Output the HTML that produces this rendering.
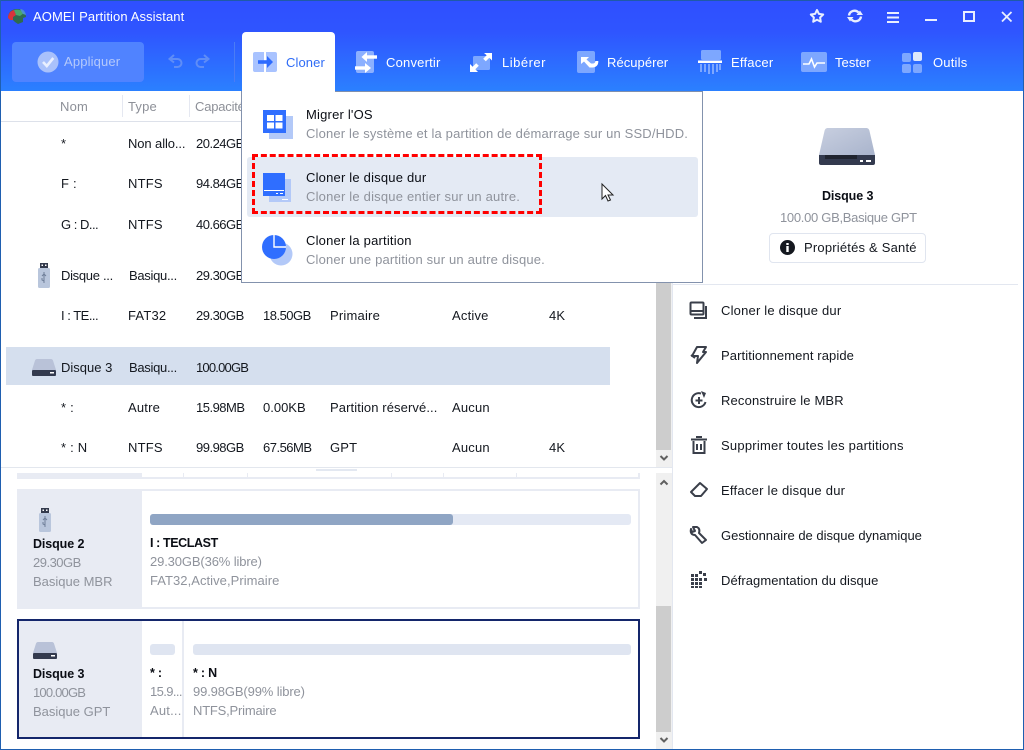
<!DOCTYPE html>
<html lang="fr"><head><meta charset="utf-8"><title>AOMEI Partition Assistant</title>
<style>
*{box-sizing:border-box}
html,body{margin:0;padding:0;width:1024px;height:750px;overflow:hidden;background:#fff}
body{position:relative;font-family:"Liberation Sans",sans-serif;font-size:13px;color:#111827}
.a{position:absolute}
.t{position:absolute;white-space:nowrap;line-height:16px;font-size:13px;letter-spacing:.2px;color:#14181f}
.g{color:#8f939c}
.h{color:#8d9098}
.b{font-weight:bold;font-size:12.5px;color:#0a0d14;letter-spacing:-.2px}
.w{color:#fff;letter-spacing:.2px}
.n7{letter-spacing:-.5px}
.n8{letter-spacing:-.8px}
.s{letter-spacing:-.3px}
.z{letter-spacing:0}
svg{position:absolute;overflow:visible}
</style></head><body>
<div class="a" style="left:0;top:0;width:1024px;height:91px;background:linear-gradient(#2f4fff,#2f55ff 35%,#2b80ff)"></div>
<div class="a" style="left:0;top:0;width:1024px;height:1px;background:#1f5aa8"></div>

<svg style="left:7px;top:8px" width="20" height="17" viewBox="0 0 20 17"><path d="M1 10C1 4 5 1 10 1c5 0 9 3 9 8l-3 1v4l-5 2-3-2-3-3H3z" fill="#2f6b4f"/><path d="M1 10C1 6 3 3 7 2l2 5-3 2v3H3z" fill="#d8343c"/><path d="M7 2c4-1 8 0 10 3l-4 3-4-1z" fill="#4aa76b"/><path d="M13 1c3 0 5 2 6 6l-3-1z" fill="#4b8fd0"/></svg>
<div class="t w" style="left:33px;top:9px;letter-spacing:.1px">AOMEI Partition Assistant</div>

<svg style="left:809px;top:8px" width="16" height="16" viewBox="0 0 16 16"><path d="M8 2l1.900 3.900 4.300.6-3.100 3 .7 4.300L8 11.800l-3.800 2 .7-4.300-3.100-3 4.300-.6z" fill="none" stroke="#e8eeff" stroke-width="2" stroke-linejoin="round"/></svg>
<svg style="left:847px;top:8px" width="16" height="16" viewBox="0 0 16 16"><path d="M2 7.500A5.500 5.500 0 0 1 11.500 4.500M14 8.500A5.500 5.500 0 0 1 4.500 11.500" fill="none" stroke="#e8eeff" stroke-width="2.400"/><path d="M9.500 7h6.500L13 2.500zM6.500 9H0l3 4.500z" fill="#e8eeff"/></svg>
<div class="a" style="left:887px;top:12px;width:12px;height:2px;background:#e8eeff;box-shadow:0 4.500px 0 #e8eeff,0 9px 0 #e8eeff"></div>
<div class="a" style="left:925px;top:19px;width:12px;height:2px;background:#e8eeff"></div>
<div class="a" style="left:963px;top:11px;width:12px;height:11px;border:2px solid #e8eeff"></div>
<svg style="left:1001px;top:11px" width="12" height="12" viewBox="0 0 12 12"><path d="M1 1l9.500 9.500M10.500 1L1 10.500" stroke="#e8eeff" stroke-width="1.800"/></svg>

<div class="a" style="left:12px;top:42px;width:132px;height:40px;border-radius:4px;background:#5083ff"></div>
<svg style="left:37px;top:51px" width="22" height="22" viewBox="0 0 22 22"><circle cx="11" cy="11" r="10.500" fill="#a9c1fb"/><path d="M6 11l3.800 4 6.500-8" fill="none" stroke="#e9efff" stroke-width="2.600"/></svg>
<div class="t" style="left:64px;top:54px;color:#b5c9fb;letter-spacing:.15px">Appliquer</div>
<svg style="left:168px;top:54px" width="16" height="14" viewBox="0 0 16 14"><path d="M6 1L1.500 5 6 8.500M2 5h7.500a4 4 0 0 1 0 8H6" fill="none" stroke="#5f8df6" stroke-width="2"/></svg>
<svg style="left:194px;top:54px" width="16" height="14" viewBox="0 0 16 14"><path d="M10 1l4.500 4L10 8.500M14 5H6.500a4 4 0 0 0 0 8H10" fill="none" stroke="#5f8df6" stroke-width="2"/></svg>
<div class="a" style="left:234px;top:42px;width:1px;height:40px;background:#4b7cf5"></div>

<div class="a" style="left:242px;top:32px;width:93px;height:60px;background:#fff;border-radius:4px 4px 0 0"></div>
<div class="a" style="left:253px;top:52px;width:24px;height:20px;background:linear-gradient(90deg,#a9c3ff 0 11px,transparent 11px 13px,#a9c3ff 13px);border-radius:2px"></div>
<svg style="left:258px;top:56px" width="16" height="12" viewBox="0 0 16 12"><path d="M0 6h10" stroke="#2d6bff" stroke-width="3.600"/><path d="M9 0l6 6-6 6z" fill="#2d6bff"/></svg>
<div class="t" style="left:286px;top:55px;color:#2f6cf6;letter-spacing:.1px">Cloner</div>

<svg style="left:355px;top:51px" width="22" height="23" viewBox="0 0 22 23"><rect x="1" y="0" width="18" height="22" rx="2" fill="#8cb0ff"/><path d="M10 6h12" stroke="#fff" stroke-width="3.400"/><path d="M12 1L6.500 6l5.500 5z" fill="#fff"/><path d="M0 17h11" stroke="#fff" stroke-width="3.400"/><path d="M10 12l6 5-6 5z" fill="#fff"/></svg>
<div class="t w" style="left:386px;top:55px">Convertir</div>
<svg style="left:470px;top:53px" width="22" height="19" viewBox="0 0 22 19"><rect x="3" y="3" width="17" height="14" rx="1.500" fill="#7da7ff"/><path d="M14 0h8v7.500l-2.700-2.700-3.500 3.500-2.600-2.600 3.500-3.500zM0 19v-8l2.700 2.700 3.500-3.500 2.600 2.600-3.500 3.500L8 19z" fill="#fff"/></svg>
<div class="t w" style="left:502px;top:55px;letter-spacing:.5px">Libérer</div>
<svg style="left:577px;top:51px" width="22" height="22" viewBox="0 0 22 22"><rect x="0" y="0" width="18" height="22" rx="2" fill="#7da7ff"/><path d="M4 6h8l-2.500 2.500 4.500 4h1.500c2 0 2.800-1 2.800-2.500h3c.3 4-2.300 6.500-5.800 6.500h-3L7 10.500 4 13z" fill="#fff"/></svg>
<div class="t w" style="left:607px;top:55px;letter-spacing:.05px">Récupérer</div>
<svg style="left:698px;top:50px" width="26" height="24" viewBox="0 0 26 24"><rect x="3" y="0" width="20" height="10" rx="1.500" fill="#7da7ff"/><rect x="0" y="10.500" width="24" height="2.500" fill="#fff"/><path d="M3 14v8M7 14v8M11 14v10M15 14v10M19 14v8M22 14v6" stroke="#7da7ff" stroke-width="2"/></svg>
<div class="t w" style="left:731px;top:55px">Effacer</div>
<svg style="left:801px;top:52px" width="26" height="20" viewBox="0 0 26 20"><rect width="26" height="20" rx="2" fill="#7da7ff"/><path d="M2 12h6l2.500-5 3 8 2.500-4h8" fill="none" stroke="#fff" stroke-width="1.600"/></svg>
<div class="t w" style="left:835px;top:55px;letter-spacing:.05px">Tester</div>
<svg style="left:902px;top:52px" width="21" height="21" viewBox="0 0 21 21"><rect x="0" y="1" width="9" height="9" rx="2" fill="#7da7ff"/><rect x="11" y="0" width="9" height="9" rx="2" fill="#dfe8fb"/><rect x="0" y="12" width="9" height="9" rx="2" fill="#7da7ff"/><rect x="11" y="12" width="9" height="9" rx="2" fill="#7da7ff"/></svg>
<div class="t w" style="left:933px;top:55px">Outils</div>

<!-- table -->
<div class="t h" style="left:60px;top:99px">Nom</div>
<div class="a" style="left:122px;top:95px;width:1px;height:22px;background:#e5e8f1"></div>
<div class="t h" style="left:128px;top:99px">Type</div>
<div class="a" style="left:189px;top:95px;width:1px;height:22px;background:#e5e8f1"></div>
<div class="t h" style="left:195px;top:99px;letter-spacing:-.2px">Capacité</div>
<div class="a" style="left:1px;top:121px;width:241px;height:1px;background:#dde1ea"></div>
<div class="a" style="left:6px;top:347px;width:604px;height:38px;background:#d5dfee"></div>

<div class="t" style="left:61px;top:136px">*</div><div class="t" style="left:128px;top:136px;letter-spacing:-.1px">Non allo...</div><div class="t n7" style="left:196px;top:136px">20.24GB</div>
<div class="t" style="left:61px;top:176px">F :</div><div class="t" style="left:128px;top:176px">NTFS</div><div class="t n7" style="left:196px;top:176px">94.84GB</div>
<div class="t" style="left:61px;top:217px;letter-spacing:-.5px">G : D...</div><div class="t" style="left:128px;top:217px">NTFS</div><div class="t n7" style="left:196px;top:217px">40.66GB</div>
<div class="t s" style="left:61px;top:268px">Disque ...</div><div class="t s" style="left:129px;top:268px">Basiqu...</div><div class="t n7" style="left:196px;top:268px">29.30GB</div>
<div class="t" style="left:61px;top:308px;letter-spacing:-.5px">I : TE...</div><div class="t" style="left:128px;top:308px">FAT32</div><div class="t n7" style="left:196px;top:308px">29.30GB</div><div class="t n7" style="left:263px;top:308px">18.50GB</div><div class="t" style="left:330px;top:308px">Primaire</div><div class="t" style="left:452px;top:308px">Active</div><div class="t" style="left:549px;top:308px">4K</div>
<div class="t z" style="left:61px;top:360px">Disque 3</div><div class="t s" style="left:129px;top:360px">Basiqu...</div><div class="t n8" style="left:196px;top:360px">100.00GB</div>
<div class="t" style="left:61px;top:400px">* :</div><div class="t" style="left:128px;top:400px">Autre</div><div class="t n7" style="left:196px;top:400px">15.98MB</div><div class="t z" style="left:263px;top:400px">0.00KB</div><div class="t" style="left:330px;top:400px;letter-spacing:.1px">Partition réservé...</div><div class="t" style="left:452px;top:400px">Aucun</div>
<div class="t" style="left:61px;top:440px">* : N</div><div class="t" style="left:128px;top:440px">NTFS</div><div class="t n7" style="left:196px;top:440px">99.98GB</div><div class="t n7" style="left:263px;top:440px">67.56MB</div><div class="t" style="left:330px;top:440px">GPT</div><div class="t" style="left:452px;top:440px">Aucun</div><div class="t" style="left:549px;top:440px">4K</div>

<svg style="left:38px;top:263px" width="12" height="25" viewBox="0 0 12 25"><rect x="2" y="0" width="8" height="5" fill="#333a4c"/><rect x="3.500" y="1.500" width="1.500" height="1.500" fill="#fff"/><rect x="7" y="1.500" width="1.500" height="1.500" fill="#fff"/><rect x="0" y="5" width="12" height="20" rx="1.500" fill="#b9c6dc"/><path d="M6 9v11M4 13l2-2 2 2M4 15v2l2 1" stroke="#6f7f99" fill="none"/></svg>
<svg style="left:32px;top:359px" width="24" height="17" viewBox="0 0 24 17"><path d="M5 0h14c1 0 1.500.5 2 1.500L24 11H0L3 1.500C3.500.5 4 0 5 0z" fill="#b9c2d8"/><rect y="11" width="24" height="6" rx="1" fill="#333a4e"/><rect x="18" y="13" width="4" height="1.500" fill="#fff"/></svg>

<!-- table scrollbar -->
<div class="a" style="left:656px;top:91px;width:16px;height:376px;background:#f0f0f0"></div>
<div class="a" style="left:656px;top:283px;width:15px;height:167px;background:#cdcdcd"></div>
<svg style="left:660px;top:455px" width="8" height="7" viewBox="0 0 8 7"><path d="M.5 1l3.500 3.500L7.500 1" fill="none" stroke="#606060" stroke-width="2"/></svg>
<div class="a" style="left:672px;top:91px;width:1px;height:659px;background:#e3e7f0"></div>

<!-- splitter -->
<div class="a" style="left:1px;top:467px;width:671px;height:1px;background:#e3e7ee"></div>
<div class="a" style="left:316px;top:469px;width:41px;height:2px;background:#e3e8f1"></div>

<!-- lower -->
<div class="a" style="left:17px;top:473px;width:125px;height:6px;background:#e8ebf3"></div>
<div class="a" style="left:142px;top:477px;width:498px;height:2px;background:#e8ebf3"></div>
<div class="a" style="left:183px;top:473px;width:1px;height:4px;background:#e8ebf3"></div>
<div class="a" style="left:247px;top:473px;width:1px;height:4px;background:#e8ebf3"></div>
<div class="a" style="left:391px;top:473px;width:1px;height:4px;background:#e8ebf3"></div>
<div class="a" style="left:443px;top:473px;width:1px;height:4px;background:#e8ebf3"></div>
<div class="a" style="left:516px;top:473px;width:1px;height:4px;background:#e8ebf3"></div>
<div class="a" style="left:638px;top:473px;width:2px;height:4px;background:#e8ebf3"></div>

<div class="a" style="left:17px;top:489px;width:623px;height:120px;border:2px solid #e8ebf3"></div>
<div class="a" style="left:17px;top:489px;width:125px;height:120px;background:#e8ebf3"></div>
<div class="a" style="left:150px;top:514px;width:481px;height:11px;border-radius:3px;background:#e4e9f4"></div>
<div class="a" style="left:150px;top:514px;width:303px;height:11px;border-radius:3px;background:#8fa5c4"></div>
<svg style="left:39px;top:508px" width="12" height="24" viewBox="0 0 12 24"><rect x="2" y="0" width="8" height="5" fill="#333a4c"/><rect x="3.500" y="1.500" width="1.500" height="1.500" fill="#fff"/><rect x="7" y="1.500" width="1.500" height="1.500" fill="#fff"/><rect x="0" y="5" width="12" height="19" rx="1.500" fill="#b9c6dc"/><path d="M6 8v11M4 12l2-2 2 2M4 14v2l2 1" stroke="#6f7f99" fill="none"/></svg>
<div class="t b" style="left:33px;top:536px;letter-spacing:-.1px">Disque 2</div>
<div class="t g n7" style="left:33px;top:555px">29.30GB</div>
<div class="t g z" style="left:33px;top:574px">Basique MBR</div>
<div class="t b" style="left:150px;top:535px;letter-spacing:-.4px">I : TECLAST</div>
<div class="t g" style="left:150px;top:554px;letter-spacing:-.13px">29.30GB(36% libre)</div>
<div class="t g" style="left:150px;top:573px;letter-spacing:.05px">FAT32,Active,Primaire</div>

<div class="a" style="left:17px;top:619px;width:125px;height:120px;background:#e8ebf3"></div>
<div class="a" style="left:17px;top:619px;width:623px;height:120px;border:2px solid #14266b"></div>
<div class="a" style="left:182px;top:621px;width:2px;height:116px;background:#e8ebf3"></div>
<div class="a" style="left:150px;top:644px;width:25px;height:11px;border-radius:3px;background:#dfe5f1"></div>
<div class="a" style="left:193px;top:644px;width:438px;height:11px;border-radius:3px;background:#dfe5f1"></div>
<svg style="left:33px;top:642px" width="24" height="17" viewBox="0 0 24 17"><path d="M5 0h14c1 0 1.500.5 2 1.500L24 11H0L3 1.500C3.500.5 4 0 5 0z" fill="#b9c2d8"/><rect y="11" width="24" height="6" rx="1" fill="#333a4e"/><rect x="18" y="13" width="4" height="1.500" fill="#fff"/></svg>
<div class="t b" style="left:33px;top:666px;letter-spacing:-.1px">Disque 3</div>
<div class="t g n8" style="left:33px;top:685px">100.00GB</div>
<div class="t g z" style="left:33px;top:704px">Basique GPT</div>
<div class="t b" style="left:150px;top:665px">* :</div>
<div class="t g" style="left:150px;top:684px;letter-spacing:-.6px">15.9...</div>
<div class="t g" style="left:150px;top:703px">Aut...</div>
<div class="t b" style="left:193px;top:665px">* : N</div>
<div class="t g" style="left:193px;top:684px;letter-spacing:-.13px">99.98GB(99% libre)</div>
<div class="t g" style="left:193px;top:703px;letter-spacing:-.2px">NTFS,Primaire</div>

<div class="a" style="left:656px;top:473px;width:16px;height:276px;background:#f0f0f0"></div>
<div class="a" style="left:656px;top:606px;width:15px;height:126px;background:#cdcdcd"></div>
<svg style="left:660px;top:479px" width="8" height="7" viewBox="0 0 8 7"><path d="M.5 5.500L4 2l3.500 3.500" fill="none" stroke="#606060" stroke-width="2"/></svg>
<svg style="left:660px;top:737px" width="8" height="7" viewBox="0 0 8 7"><path d="M.5 1l3.500 3.500L7.500 1" fill="none" stroke="#606060" stroke-width="2"/></svg>

<!-- right panel -->
<svg style="left:819px;top:128px" width="56" height="38" viewBox="0 0 56 38"><defs><linearGradient id="d" x1="0" y1="0" x2="1" y2="1"><stop offset="0" stop-color="#c8cfe0"/><stop offset="1" stop-color="#a9b4cc"/></linearGradient></defs><path d="M9 0h38c2 0 3 1 3.500 3L56 27H0L5.500 3C6 1 7 0 9 0z" fill="url(#d)"/><path d="M0 27h56v8a2 2 0 0 1-2 2H2a2 2 0 0 1-2-2z" fill="#333a4e"/><rect x="6" y="27" width="32" height="4" fill="#20242f"/><rect x="41" y="32" width="3" height="2" fill="#fff"/><rect x="47" y="32" width="5" height="2" fill="#fff"/></svg>
<div class="t b" style="left:822px;top:188px;letter-spacing:-.1px">Disque 3</div>
<div class="t g" style="left:780px;top:210px;letter-spacing:-.3px">100.00 GB,Basique GPT</div>
<div class="a" style="left:769px;top:233px;width:157px;height:30px;border:1px solid #e0e5ef;border-radius:4px"></div>
<svg style="left:780px;top:240px" width="15" height="15" viewBox="0 0 15 15"><circle cx="7.500" cy="7.500" r="7.500" fill="#14181f"/><rect x="6.300" y="6" width="2.400" height="6" fill="#fff"/><rect x="6.300" y="3" width="2.400" height="2" fill="#fff"/></svg>
<div class="t" style="left:804px;top:240px">Propriétés &amp; Santé</div>
<div class="a" style="left:673px;top:284px;width:345px;height:1px;background:#e3e7f0"></div>

<svg style="left:689px;top:301px" width="18" height="18" viewBox="0 0 18 18"><rect x="1.500" y="1.500" width="13" height="12" rx="1" fill="none" stroke="#3a3f4a" stroke-width="2"/><path d="M1.500 10h13M17 5v12H5" fill="none" stroke="#3a3f4a" stroke-width="2"/></svg>
<div class="t" style="left:721px;top:303px">Cloner le disque dur</div>
<svg style="left:690px;top:346px" width="18" height="18" viewBox="0 0 18 18"><path d="M7 1h9l-3 5h3l-9 11 1-7H2z M5 12l-4-3" fill="none" stroke="#3a3f4a" stroke-width="2" stroke-linejoin="round"/></svg>
<div class="t" style="left:721px;top:348px;letter-spacing:.1px">Partitionnement rapide</div>
<svg style="left:690px;top:391px" width="18" height="18" viewBox="0 0 18 18"><path d="M15.500 11A7 7 0 1 1 11 2.500" fill="none" stroke="#3a3f4a" stroke-width="2"/><path d="M9 6v7M5.500 9.500h7" stroke="#3a3f4a" stroke-width="2"/><path d="M11 0l5 2-2 5z" fill="#3a3f4a"/></svg>
<div class="t" style="left:721px;top:393px;letter-spacing:.15px">Reconstruire le MBR</div>
<svg style="left:691px;top:436px" width="16" height="18" viewBox="0 0 16 18"><path d="M0 3.500h16M5 1h6" stroke="#3a3f4a" stroke-width="2"/><path d="M2.500 5v12h11V5M6 8v6M10 8v6" fill="none" stroke="#3a3f4a" stroke-width="2"/></svg>
<div class="t" style="left:721px;top:438px;letter-spacing:.23px">Supprimer toutes les partitions</div>
<svg style="left:690px;top:482px" width="18" height="16" viewBox="0 0 18 16"><path d="M10 1l7 6-6 7H5l-4-4z" fill="none" stroke="#3a3f4a" stroke-width="2" stroke-linejoin="round"/></svg>
<div class="t" style="left:721px;top:483px;letter-spacing:.25px">Effacer le disque dur</div>
<svg style="left:690px;top:526px" width="18" height="18" viewBox="0 0 18 18"><path d="M7 1L3 1 5 5 2 6 1 3C0 7 2 9 5 9l7 8 4-3-7-7c1-3 0-5-2-6z" fill="none" stroke="#3a3f4a" stroke-width="2" stroke-linejoin="round"/></svg>
<div class="t z" style="left:721px;top:528px">Gestionnaire de disque dynamique</div>
<svg style="left:691px;top:571px" width="18" height="18" viewBox="0 0 18 18" fill="#3a3f4a"><rect x="0" y="3" width="3" height="3"/><rect x="4" y="3" width="3" height="3"/><rect x="8" y="0" width="3" height="3"/><rect x="12" y="2" width="3" height="3"/><rect x="0" y="7" width="3" height="3"/><rect x="4" y="7" width="3" height="3"/><rect x="8" y="7" width="3" height="3"/><rect x="13" y="7" width="3" height="3"/><rect x="0" y="11" width="3" height="3"/><rect x="4" y="11" width="3" height="3"/><rect x="8" y="11" width="3" height="3"/><rect x="0" y="15" width="3" height="2"/><rect x="4" y="15" width="3" height="2"/><rect x="8" y="15" width="3" height="2"/></svg>
<div class="t" style="left:721px;top:573px;letter-spacing:.05px">Défragmentation du disque</div>

<!-- dropdown -->
<div class="a" style="left:241px;top:91px;width:462px;height:192px;background:#fff;border:1px solid #8392ad;border-top:0"></div>
<div class="a" style="left:242px;top:88px;width:93px;height:4px;background:#fff"></div>
<div class="a" style="left:335px;top:91px;width:368px;height:1px;background:#7f8fad"></div>
<svg style="left:263px;top:110px" width="30" height="30" viewBox="0 0 30 30"><rect x="6" y="6" width="24" height="23" fill="#b3c9f8"/><rect width="23" height="23" fill="#2f6eff"/><path d="M4 5h7v6H4zM12.500 5h7v6h-7zM4 12.500h7v6H4zM12.500 12.500h7v6h-7z" fill="#fff"/></svg>
<div class="t" style="left:306px;top:107px;color:#0a0d14">Migrer l'OS</div>
<div class="t g" style="left:306px;top:126px;letter-spacing:.16px">Cloner le système et la partition de démarrage sur un SSD/HDD.</div>

<div class="a" style="left:247px;top:157px;width:451px;height:60px;background:#e4eaf4;border-radius:3px"></div>
<svg style="left:263px;top:173px" width="30" height="30" viewBox="0 0 30 30"><rect x="6" y="6" width="22" height="23" fill="#b3c9f8"/><rect width="22" height="23" fill="#2f6eff"/><rect x="1" y="17" width="20" height="1" fill="#fff"/><rect x="13" y="20" width="2" height="1" fill="#fff"/><rect x="17" y="20" width="3" height="1" fill="#fff"/><rect x="19" y="26" width="6" height="1" fill="#fff"/></svg>
<div class="t" style="left:306px;top:170px;color:#0a0d14">Cloner le disque dur</div>
<div class="t g" style="left:306px;top:189px;letter-spacing:.2px">Cloner le disque entier sur un autre.</div>
<div class="a" style="left:252px;top:154px;width:290px;height:60px;border:3px dashed #ff0000"></div>
<svg style="left:601px;top:183px" width="13" height="20" viewBox="0 0 13 20"><path d="M1 1v15l3.500-3.500L7 18l2.500-1-2.500-5h5z" fill="#fff" stroke="#222" stroke-width="1"/></svg>

<svg style="left:262px;top:235px" width="31" height="31" viewBox="0 0 31 31"><circle cx="19" cy="19" r="11.500" fill="#b3c9f8"/><circle cx="12" cy="12" r="12" fill="#2f6eff"/><path d="M12 0v12h12" fill="none" stroke="#fff" stroke-width="1.400"/></svg>
<div class="t" style="left:306px;top:233px;color:#0a0d14">Cloner la partition</div>
<div class="t g" style="left:306px;top:252px;letter-spacing:.17px">Cloner une partition sur un autre disque.</div>

<!-- window border -->
<div class="a" style="left:0;top:0;width:1px;height:750px;background:#1f5fb0"></div>
<div class="a" style="left:1023px;top:0;width:1px;height:750px;background:#1f5fb0"></div>
<div class="a" style="left:0;top:749px;width:1024px;height:1px;background:#1f5fb0"></div>
</body></html>
